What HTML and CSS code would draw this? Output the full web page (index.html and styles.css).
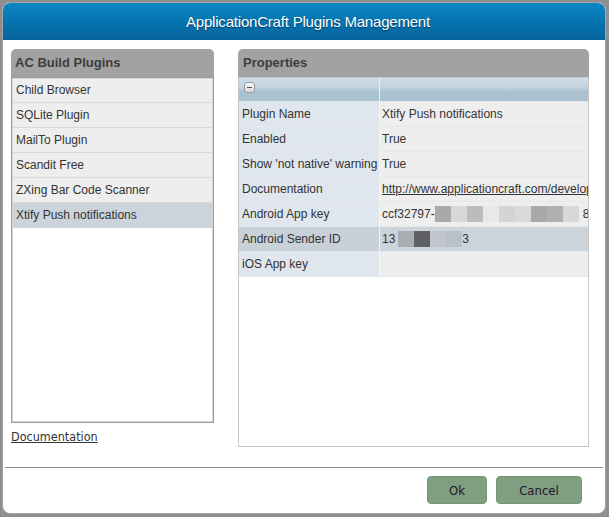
FILE: index.html
```html
<!DOCTYPE html>
<html>
<head>
<meta charset="utf-8">
<title>ApplicationCraft Plugins Management</title>
<link rel="stylesheet" href="styles.css">
</head>
<body>
<div class="dialog">
  <div class="titlebar">ApplicationCraft Plugins Management</div>
  <div class="content">
    <div class="left">
      <div class="panel-head">AC Build Plugins</div>
      <ul class="list">
        <li>Child Browser</li>
        <li>SQLite Plugin</li>
        <li>MailTo Plugin</li>
        <li>Scandit Free</li>
        <li>ZXing Bar Code Scanner</li>
        <li class="selected">Xtify Push notifications</li>
      </ul>
      <a class="doc-link" href="#">Documentation</a>
    </div>
    <div class="right">
      <div class="panel-head">Properties</div>
      <div class="grid">
        <div class="grid-head">
          <div class="gh-cell gh-label"><span class="collapse"></span></div>
          <div class="gh-cell"></div>
        </div>
        <div class="row"><div class="label">Plugin Name</div><div class="value">Xtify Push notifications</div></div>
        <div class="row"><div class="label">Enabled</div><div class="value">True</div></div>
        <div class="row"><div class="label">Show 'not native' warning</div><div class="value">True</div></div>
        <div class="row"><div class="label">Documentation</div><div class="value"><a class="url" href="#">http://www.applicationcraft.com/developers/plugins</a></div></div>
        <div class="row"><div class="label">Android App key</div><div class="value">ccf32797-<span class="blur s1"></span><span class="blur s2"></span><span class="blur s3"></span><span class="blur s4"></span><span class="blur s5"></span><span class="blur s6"></span><span class="blur s1"></span><span class="blur s7"></span><span class="blur s2"></span><span class="gap"></span>8</div></div>
        <div class="row selected"><div class="label">Android Sender ID</div><div class="value">13<span class="blur t1"></span><span class="blur t2"></span><span class="blur t3"></span><span class="blur t4"></span>3</div></div>
        <div class="row"><div class="label">iOS App key</div><div class="value"></div></div>
      </div>
    </div>
  </div>
  <div class="footer">
    <button class="btn btn-ok">Ok</button>
    <button class="btn btn-cancel">Cancel</button>
  </div>
</div>
</body>
</html>
```

FILE: styles.css
```css
html, body {
  margin: 0;
  padding: 0;
}
body {
  background: #8e8e8e;
  width: 609px;
  height: 517px;
  overflow: hidden;
  font-family: "Liberation Sans", Arial, sans-serif;
  font-size: 12px;
  color: #333;
}
.dialog {
  margin: 2px;
  width: 602px;
  height: 510px;
  border: 1px solid #a4a4a4;
  border-radius: 8px;
  background: #fff;
  overflow: hidden;
  display: flex;
  flex-direction: column;
}
.titlebar {
  height: 37px;
  line-height: 37px;
  text-align: center;
  color: #fff;
  font-size: 15px;
  letter-spacing: -0.2px;
  padding-left: 8px;
  background: linear-gradient(#0a87c4, #0574b0 50%, #05649a);
  text-shadow: 0 1px 1px #03385a;
}
.content {
  display: flex;
  gap: 24px;
  padding: 9px 16px 0 8px;
  height: 398px;
}
.left {
  width: 203px;
  display: flex;
  flex-direction: column;
}
.right {
  width: 351px;
  display: flex;
  flex-direction: column;
}
.panel-head {
  height: 28px;
  line-height: 28px;
  background: #a2a2a2;
  border-radius: 5px 5px 0 0;
  padding-left: 5px;
  font-weight: bold;
  font-size: 13px;
  color: #3d3d3d;
}
.left .panel-head {
  padding-left: 4px;
}
.list {
  list-style: none;
  margin: 0;
  padding: 0;
  height: 344px;
  border: 1px solid #9c9c9c;
  box-shadow: inset 0 0 0 1px #d6d6d6;
  background: #fff;
}
.list li {
  height: 24px;
  line-height: 24px;
  margin: 0 1px;
  padding-left: 3px;
  background: #eeeeee;
  border-bottom: 1px solid #d9d9d9;
  white-space: nowrap;
}
.list li:first-child {
  margin-top: 1px;
  height: 23px;
  line-height: 23px;
}
.list li.selected {
  background: #cbd3db;
  border-bottom-color: #cbd3db;
}
.doc-link {
  margin-top: 7px;
  font-family: "DejaVu Sans Condensed", "DejaVu Sans", sans-serif;
  font-size: 12.5px;
  line-height: 14px;
  color: #333;
  text-decoration: underline;
}
.grid {
  height: 368px;
  border: 1px solid #c6c6c6;
  background: #fff;
}
.grid-head {
  display: grid;
  grid-template-columns: 140px 208px;
  column-gap: 1px;
  background: #e8eef2;
  height: 23px;
}
.gh-cell {
  background: linear-gradient(#cfdce6, #c3d4df 40%, #abc2d2 60%, #a8c0d0);
  position: relative;
}
.collapse {
  position: absolute;
  left: 5px;
  top: 4px;
  width: 9px;
  height: 9px;
  border: 1px solid #9a9a9a;
  border-radius: 3px;
  background: linear-gradient(#fafafa, #d8d8d8);
}
.collapse::after {
  content: "";
  position: absolute;
  left: 2px;
  top: 4px;
  width: 5px;
  height: 1px;
  background: #555;
}
.row {
  display: grid;
  grid-template-columns: 140px 208px;
  column-gap: 1px;
  background: #f2f4f6;
  border-top: 1px solid #e3e8ed;
  height: 24px;
}
.label, .value {
  line-height: 24px;
  white-space: nowrap;
  overflow: hidden;
}
.label {
  background: #dfe6ee;
  padding-left: 3px;
}
.value {
  background: #eeeeee;
  padding-left: 2px;
}
.row.selected .label {
  background: #c8d0d8;
}
.row.selected .value {
  background: #cbd3db;
}
.row:last-child {
  border-bottom: 1px solid #e3e8ed;
}
.url {
  color: #333;
  text-decoration: underline;
}
.blur {
  display: inline-block;
  width: 16px;
  height: 16px;
  vertical-align: middle;
  margin-top: -2px;
}
.gap {
  display: inline-block;
  width: 4px;
}
.s1 { background: #a9a9a9; }
.s2 { background: #d8d8d8; }
.s3 { background: #bcbcbc; }
.s4 { background: #e8e8e8; }
.s5 { background: #d4d4d4; }
.s6 { background: #dadada; }
.s7 { background: #b0b0b0; }
.t1 { background: #a9adb3; margin-left: 3px; }
.t2 { background: #5e6064; }
.t3 { background: #c0c6cc; }
.t4 { background: #b8c0c8; }
.footer {
  margin: 20px 2px 0;
  border-top: 1px solid #8a8a8a;
  padding: 8px 21px 0 0;
  display: flex;
  justify-content: flex-end;
  gap: 9px;
}
.btn {
  height: 28px;
  border: 1px solid #76967a;
  border-radius: 4px;
  background: #809f80;
  color: #22142e;
  font-family: "DejaVu Sans Condensed", "DejaVu Sans", sans-serif;
  font-size: 13px;
  padding: 0;
}
.btn-ok { width: 60px; }
.btn-cancel { width: 86px; }
```
